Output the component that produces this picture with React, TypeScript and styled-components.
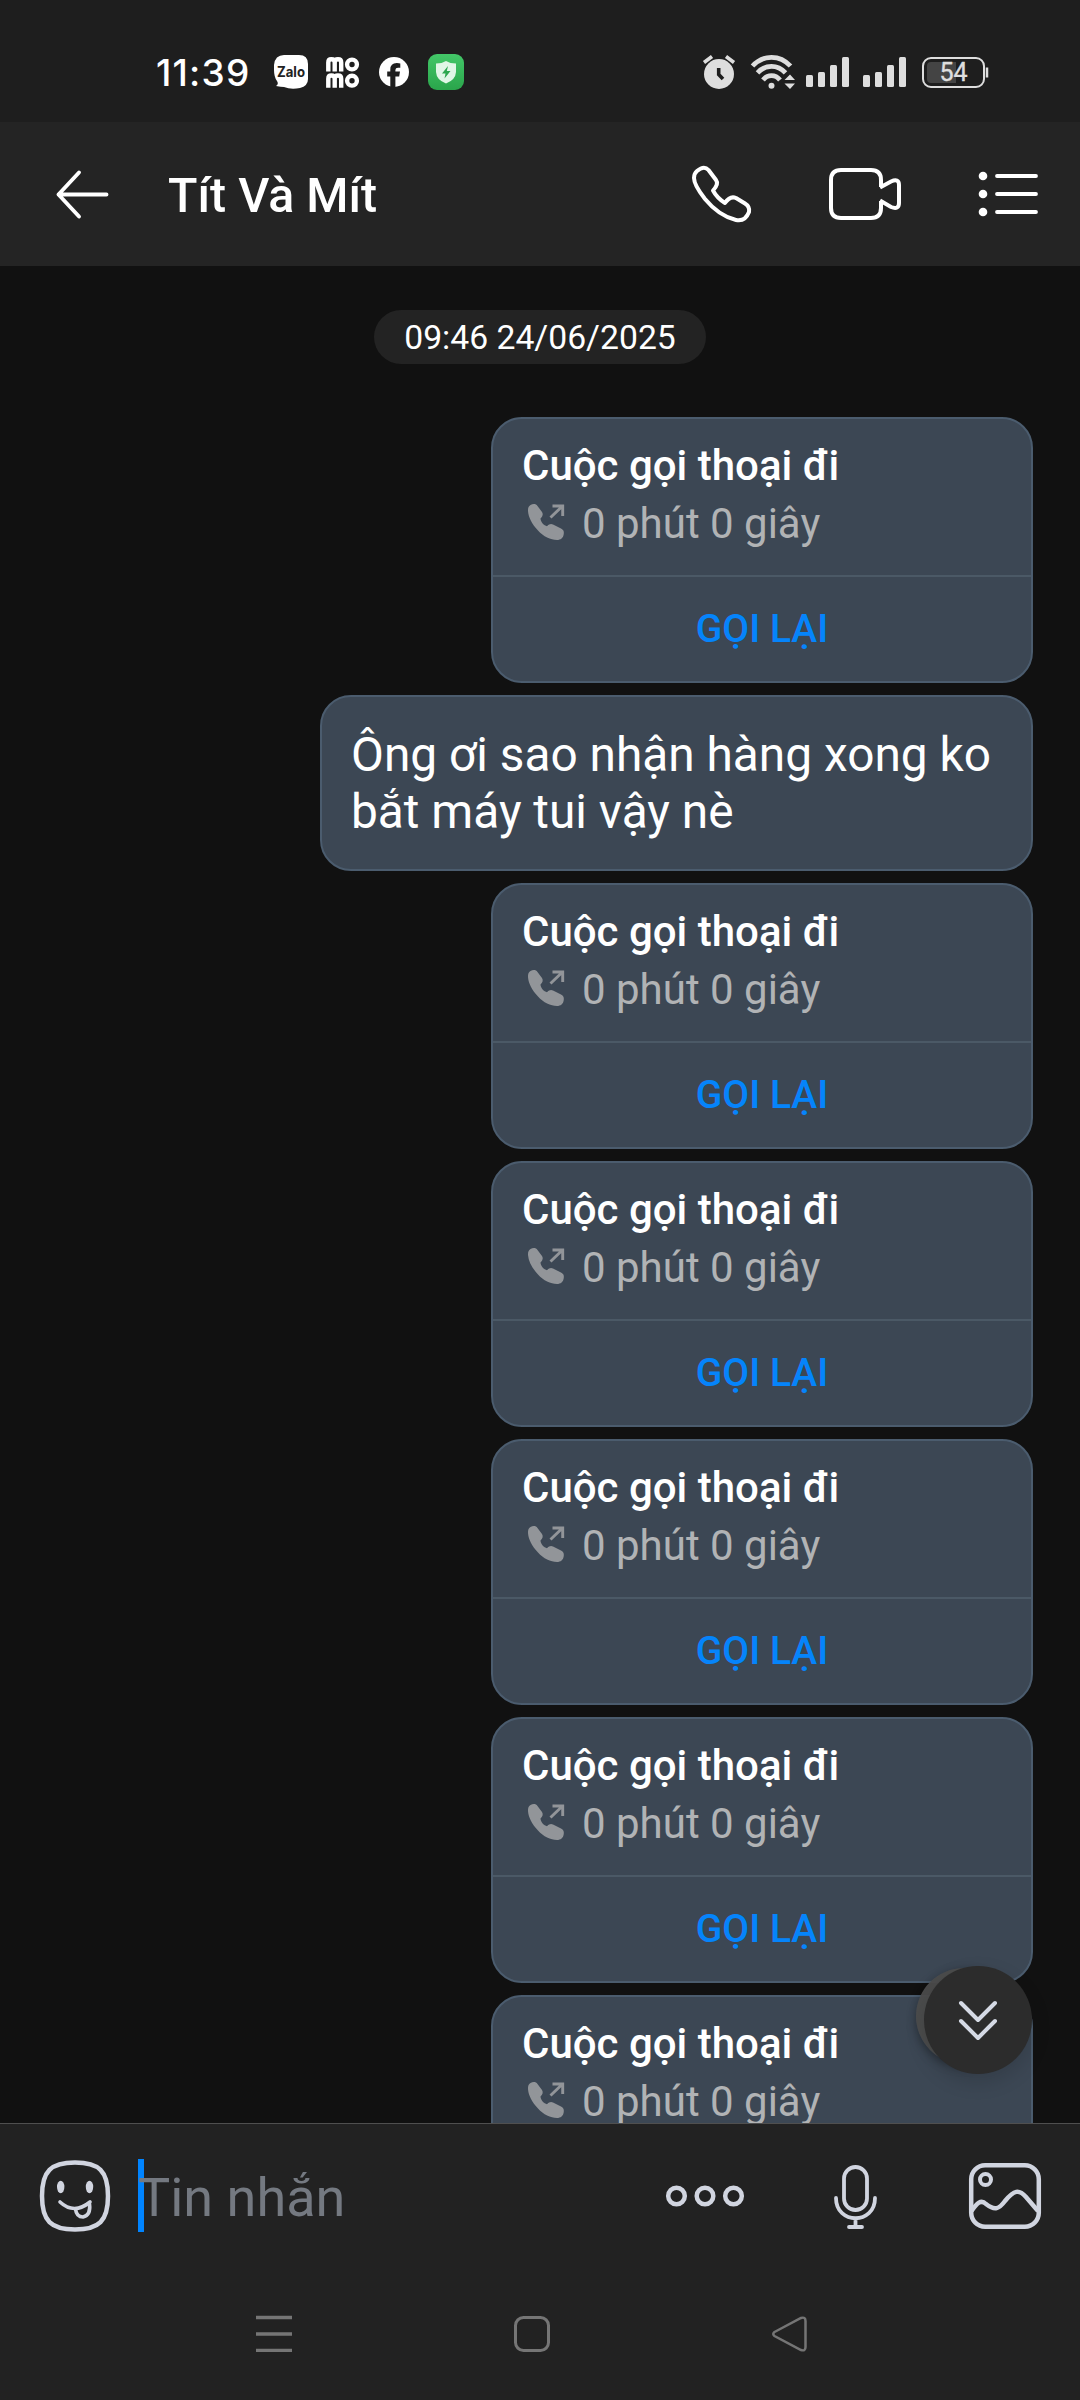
import React from "react";
import styled, { createGlobalStyle } from "styled-components";

const Global = createGlobalStyle`
  * { box-sizing: border-box; }
  body { margin: 0; background: #111; }
`;

const Screen = styled.div`
  width: 1080px;
  height: 2400px;
  display: flex;
  flex-direction: column;
  background: #111111;
  overflow: hidden;
  font-family: Roboto, "Noto Sans", sans-serif;
  color: #fff;
`;

const StatusBar = styled.div`
  height: 122px;
  flex: none;
  display: flex;
  justify-content: space-between;
  align-items: flex-start;
  padding: 50px 91px 0 156px;
  background: #1e1e1e;
`;
const StatusGroup = styled.div`
  display: flex;
  align-items: center;
  height: 44px;
`;
const Clock = styled.span`
  width: 118px;
  padding-top: 1px;
  font: 500 37px/44px Inter, Roboto, sans-serif;
  letter-spacing: 1.2px;
  white-space: nowrap;
`;
const Icon = styled.svg<{ $left?: number }>`
  display: block;
  flex: none;
  overflow: visible;
  margin-left: ${(p) => p.$left ?? 0}px;
`;

const Header = styled.header`
  height: 144px;
  flex: none;
  display: flex;
  align-items: center;
  background: #242424;
  padding: 0 41px 0 57px;
`;
const Title = styled.h1`
  margin: 4px 0 0 58px;
  flex: 1;
  font-size: 48.3px;
  line-height: 56px;
  font-weight: 500;
`;
const HeaderActions = styled.div`
  display: flex;
  align-items: center;
  gap: 77px;
`;

const Chat = styled.main`
  height: 1857px;
  flex: none;
  display: flex;
  flex-direction: column;
  align-items: flex-end;
  gap: 12px;
  padding: 44px 47px 0 0;
  overflow: hidden;
  position: relative;
`;
const DateChip = styled.div`
  align-self: center;
  flex: none;
  width: 332px;
  height: 54px;
  margin: 0 -47px 41px 0;
  padding-top: 1px;
  border-radius: 27px;
  background: #232323;
  font-size: 33.7px;
  line-height: 54px;
  text-align: center;
`;
const Bubble = styled.div`
  flex: none;
  background: #3c4754;
  border: 2px solid #4b5c6e;
  border-radius: 31px;
`;
const CallCard = styled(Bubble)`
  width: 542px;
  height: 266px;
  display: flex;
  flex-direction: column;
`;
const CallInfo = styled.div`
  height: 158px;
  border-bottom: 2px solid #4b5966;
  padding: 22px 29px 0;
`;
const CallTitle = styled.div`
  font-size: 42px;
  line-height: 50px;
  font-weight: 500;
`;
const CallDetail = styled.div`
  display: flex;
  align-items: flex-start;
  gap: 18px;
  margin-top: 8px;
  padding-left: 6px;
  font-size: 42px;
  line-height: 50px;
  color: #b1b3b5;

  svg {
    margin-top: 5px;
  }
`;
const CallBack = styled.button`
  flex: 1;
  border: 0;
  padding: 0;
  background: none;
  font: 500 39px/46px Roboto, sans-serif;
  color: #0584fb;
`;
const TextBubble = styled(Bubble)`
  width: 713px;
  height: 176px;
  padding: 30px 0 0 29px;
  font-size: 47.8px;
  line-height: 57px;
`;

const ScrollDown = styled.button`
  position: absolute;
  right: 48px;
  bottom: 49px;
  width: 116px;
  height: 108px;
  border: 0;
  padding: 0;
  background: none;
`;
const Halo = styled.span`
  position: absolute;
  left: 0;
  top: 2px;
  width: 96px;
  height: 96px;
  border-radius: 50%;
  background: rgba(76, 76, 76, 0.96);
  box-shadow: 0 3px 10px rgba(0, 0, 0, 0.35);
`;
const Disc = styled.span`
  position: absolute;
  right: 0;
  top: 0;
  width: 108px;
  height: 108px;
  border-radius: 50%;
  background: #2c2c2c;
  box-shadow: 0 8px 20px rgba(0, 0, 0, 0.14);
  display: flex;
  align-items: center;
  justify-content: center;
`;

const Composer = styled.footer`
  height: 147px;
  flex: none;
  display: flex;
  align-items: center;
  border-top: 1px solid #4f4f4f;
  background: #222222;
  padding: 0 39px 3px 40px;
`;
const Field = styled.div`
  flex: 1;
  display: flex;
  align-items: center;
  height: 73px;
  margin-left: 28px;
  border-left: 6px solid #0084ff;
  font-size: 54px;
  line-height: 73px;
  color: #747981;
`;
const Placeholder = styled.span`
  margin: 4px 0 0 -6px;
`;
const Tools = styled.div`
  display: flex;
  align-items: center;
`;

const NavBar = styled.nav`
  flex: 1;
  display: flex;
  align-items: flex-start;
  gap: 218px;
  background: #222222;
  padding: 44px 0 0 254px;
`;

const Signal = ({ left }: { left: number }) => (
  <Icon $left={left} width="43" height="30" fill="#dedede">
    <rect x="0" y="18" width="7" height="12" rx="1.5" />
    <rect x="12" y="15" width="7" height="15" rx="1.5" />
    <rect x="24" y="8" width="7" height="22" rx="1.5" />
    <rect x="36" y="0" width="7" height="30" rx="1.5" />
  </Icon>
);

const Zalo = () => (
  <Icon width="34" height="34" viewBox="0 0 34 34">
    <path d="M10 0H25Q34 0 34 9V24Q34 31 26 33Q17 35 10 32Q7 32 2 31Q5 29 3 26Q0 22 0 15V10Q1 0 10 0Z" fill="#fff" />
    <text x="17" y="21.5" textAnchor="middle" fontFamily="Inter, sans-serif" fontWeight="700" fontSize="14" textLength="28" lengthAdjust="spacingAndGlyphs" fill="#222">Zalo</text>
  </Icon>
);

const Momo = () => (
  <Icon $left={18} width="33" height="31" viewBox="0 0 33 31" fill="none" stroke="#fff" strokeWidth="4.400">
    {[0, 16.2].map((y) => (
      <g key={y} transform={`translate(0 ${y})`}>
        <path d="M2.300 14.500V5.500Q2.300 2.300 5.300 2.300Q8.700 2.300 8.700 5.500V14.500M8.700 14.500V5.500Q8.700 2.300 12 2.300Q15.200 2.300 15.200 5.500V14.500" />
        <circle cx="26" cy="7.500" r="4.900" />
      </g>
    ))}
  </Icon>
);

const Facebook = () => (
  <Icon $left={20} width="30" height="30" viewBox="0 0 30 30">
    <circle cx="15" cy="15" r="15" fill="#fff" />
    <path d="M11.300 30V19.500H8.200V14.500H11.300V12.500Q11.300 6 17.800 6Q20 6 21.300 6.500V10.800H19Q16.400 10.800 16.400 13V14.500H21L20.200 19.500H16.400V30Z" fill="#1e1e1e" />
  </Icon>
);

const Shield = () => (
  <Icon $left={19} width="36" height="36" viewBox="0 0 36 36">
    <defs>
      <linearGradient id="shieldGreen" x1="0" y1="0" x2="0" y2="1">
        <stop offset="0" stopColor="#43c768" />
        <stop offset="1" stopColor="#2aa54b" />
      </linearGradient>
    </defs>
    <rect width="36" height="36" rx="9" fill="url(#shieldGreen)" />
    <path d="M18 7Q22 9.500 28 9.500V18Q27.500 26 18 29.500Q8.500 26 8 18V9.500Q14 9.500 18 7Z" fill="#e0f6e6" />
    <path d="M20 12L14 19.500H17.500L16.500 24.500L22.500 17H18.800Z" fill="#2ca74e" />
  </Icon>
);

const Alarm = () => (
  <Icon width="32" height="34" viewBox="0 0 32 34">
    <circle cx="16" cy="19" r="15" fill="#dedede" />
    <path d="M1 7.500L9 1.500M31 7.500L23 1.500" stroke="#dedede" strokeWidth="3.600" />
    <path d="M15.700 13V19.500L20 24" fill="none" stroke="#1e1e1e" strokeWidth="3.600" />
  </Icon>
);

const Wifi = () => (
  <Icon $left={16} width="44" height="34" viewBox="0 0 44 34">
    <g fill="none" stroke="#dedede" strokeWidth="4.800">
      <path d="M1.500 11Q9.500 2.300 20.500 2.300Q31.500 2.300 39.500 11" />
      <path d="M6.500 17.800Q12.500 11.300 20.500 11.300Q28.500 11.300 34.500 17.800" />
      <path d="M12 25Q15.500 20.700 20.500 20.700Q25.500 20.700 29 25" />
    </g>
    <circle cx="20.500" cy="30.700" r="3" fill="#dedede" />
    <path d="M33.500 25L39 19.500L44 25ZM33.500 28.500H44L39 34Z" fill="#dedede" />
  </Icon>
);

const Battery = () => (
  <Icon $left={16} width="67" height="31" viewBox="0 0 67 31">
    <rect x="1" y="1" width="61" height="29" rx="8" fill="none" stroke="#dedede" strokeWidth="2" />
    <path d="M34 5H9Q5 5 5 9V22Q5 26 9 26H34Z" fill="#444" />
    <path d="M65 10.500V20.500" stroke="#dedede" strokeWidth="2.500" />
    <text x="31.500" y="24.300" textAnchor="middle" fontFamily="Roboto, sans-serif" fontSize="25" fill="#dedede" stroke="#dedede" strokeWidth="0.400">54</text>
  </Icon>
);

const OutgoingCall = () => (
  <Icon width="36" height="36" viewBox="0 0 36 36">
    <path d="M2.500 1C5 -0.300 8 -0.300 9.500 2L14 8C15.500 10.500 14.500 12.500 12.500 14.500C12.500 18 16 21.500 19 22.200C21 20 23 19.500 25 20.500L33 24.500C35.500 26 36 27 35.800 29.500C35.500 34 32.500 36 29 36C22.500 36 15.500 32.500 10 26.500C4 20 0.500 13.500 0 7C-0.100 4 0.500 2.300 2.500 1Z" fill="#929599" />
    <path d="M22.500 13.500L34 2.500M24.500 2H34.700V12" fill="none" stroke="#929599" strokeWidth="2.900" />
  </Icon>
);

const CallEntry = ({ action = true }: { action?: boolean }) => (
  <CallCard>
    <CallInfo>
      <CallTitle>Cuộc gọi thoại đi</CallTitle>
      <CallDetail>
        <OutgoingCall />
        0 phút 0 giây
      </CallDetail>
    </CallInfo>
    {action && <CallBack>GỌI LẠI</CallBack>}
  </CallCard>
);

export default function App() {
  return (
    <>
      <Global />
      <Screen>
        <StatusBar>
          <StatusGroup>
            <Clock>11:39</Clock>
            <Zalo />
            <Momo />
            <Facebook />
            <Shield />
          </StatusGroup>
          <StatusGroup>
            <Alarm />
            <Wifi />
            <Signal left={11} />
            <Signal left={14} />
            <Battery />
          </StatusGroup>
        </StatusBar>

        <Header>
          <Icon width="53" height="48" viewBox="0 0 53 48" fill="none" stroke="#fff" strokeWidth="3.900" strokeLinecap="round" strokeLinejoin="round">
            <path d="M22 2.500L1.500 24.500L22 46.500M1.500 24.500H49.500" />
          </Icon>
          <Title>Tít Và Mít</Title>
          <HeaderActions>
            <Icon width="60" height="56" viewBox="0 0 60 56" fill="none" stroke="#fff" strokeWidth="4" strokeLinejoin="round">
              <path d="M5 5Q12 -1 16.500 4L24 14Q27 18 21 24.500Q25 32 33 37Q38 29.500 44 32L53 37.500Q58 40.500 57 46Q53 56 44 54Q27 50 13 33Q2 19 2 12Q2 7.500 5 5Z" />
            </Icon>
            <Icon width="72" height="52" viewBox="0 0 72 52" fill="none" stroke="#fff" strokeWidth="4">
              <path d="M52 19V12Q52 2 42 2H12Q2 2 2 12V40Q2 50 12 50H42Q52 50 52 40V33" />
              <path d="M51 19.500L62 13.500Q70 10 70 17V35Q70 42 62 39L51 32.500" />
            </Icon>
            <Icon width="61" height="46" viewBox="0 0 61 46">
              <g fill="#fff">
                <circle cx="5" cy="5" r="4.300" />
                <circle cx="5" cy="23" r="4.300" />
                <circle cx="5" cy="41" r="4.300" />
              </g>
              <path d="M19 5H58M19 23H58M19 41H58" stroke="#fff" strokeWidth="3.800" strokeLinecap="round" />
            </Icon>
          </HeaderActions>
        </Header>

        <Chat>
          <DateChip>09:46 24/06/2025</DateChip>
          <CallEntry />
          <TextBubble>
            Ông ơi sao nhận hàng xong ko
            <br />
            bắt máy tui vậy nè
          </TextBubble>
          <CallEntry />
          <CallEntry />
          <CallEntry />
          <CallEntry />
          <CallEntry action={false} />
          <ScrollDown>
            <Halo />
            <Disc>
              <Icon width="38" height="40" viewBox="0 0 38 40" fill="none" stroke="#d5dae5" strokeWidth="4" strokeLinecap="round" strokeLinejoin="round">
                <path d="M2 3L19 20L36 3M2 21L19 38L36 21" />
              </Icon>
            </Disc>
          </ScrollDown>
        </Chat>

        <Composer>
          <Icon width="70" height="72" viewBox="0 0 70 72" fill="none" stroke="#d1d5e0" strokeWidth="4.500" strokeLinecap="round">
            <path d="M35 2.500C59 2.500 68 11 68 36C68 61 59 69.500 35 69.500C11 69.500 2 61 2 36C2 11 11 2.500 35 2.500Z" />
            <g fill="#d1d5e0" stroke="none">
              <ellipse cx="20.700" cy="27" rx="3.700" ry="6.200" />
              <ellipse cx="49.500" cy="27" rx="3.700" ry="6.200" />
            </g>
            <path d="M20 42Q34 55 50 42" strokeWidth="3.600" />
            <path d="M35.500 49Q36.500 57 43 57Q51 55 49.500 44" strokeWidth="3.600" />
          </Icon>
          <Field>
            <Placeholder>Tin nhắn</Placeholder>
          </Field>
          <Tools>
            <Icon width="78" height="21" viewBox="0 -0.500 78 21" fill="none" stroke="#d1d5e0" strokeWidth="4.500">
              <circle cx="10.500" cy="10.500" r="8.300" />
              <circle cx="39" cy="10.500" r="8.300" />
              <circle cx="67.500" cy="10.500" r="8.300" />
            </Icon>
            <Icon $left={90} width="43" height="64" viewBox="0 -1 43 64" fill="none" stroke="#d1d5e0" strokeWidth="3.800" strokeLinecap="round">
              <rect x="10" y="2" width="23" height="43" rx="11.500" />
              <path d="M2 33C2 60 41 60 41 33M21.500 54V62M15 62H28" />
            </Icon>
            <Icon $left={92} width="72" height="66" viewBox="0 0 72 66" fill="none" stroke="#d1d5e0" strokeWidth="4.500">
              <rect x="2.200" y="2.200" width="67.600" height="61.600" rx="14" />
              <circle cx="16.500" cy="16.500" r="5.500" strokeWidth="4" />
              <path d="M2.500 48C8 40 12 36 17 41C26 48 30 46 36 38C45 27 50 26 57 34L69 48" />
            </Icon>
          </Tools>
        </Composer>

        <NavBar>
          <Icon width="40" height="40" viewBox="0 0 40 40" stroke="#757575" strokeWidth="3.300">
            <path d="M2 3.500H38M2 20H38M2 36.300H38" />
          </Icon>
          <Icon width="40" height="40" viewBox="0 0 40 40" fill="none" stroke="#757575" strokeWidth="3">
            <rect x="3.500" y="3.500" width="33" height="33" rx="8" />
          </Icon>
          <Icon width="38" height="40" viewBox="0 0 38 40" fill="none" stroke="#757575" strokeWidth="2.500">
            <path d="M4.500 18L31 4Q35.500 2.500 35.500 7V33Q35.500 37.500 31 36L4.500 22Q2 20 4.500 18Z" />
          </Icon>
        </NavBar>
      </Screen>
    </>
  );
}
